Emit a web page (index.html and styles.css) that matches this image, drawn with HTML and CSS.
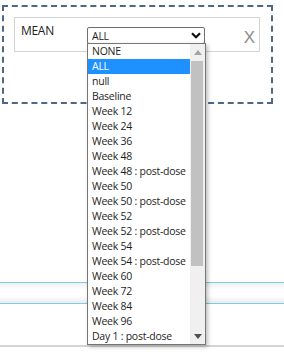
FILE: index.html
```html
<!DOCTYPE html>
<html>
<head>
<meta charset="utf-8">
<link rel="stylesheet" href="styles.css">
</head>
<body>
<div class="panel">
  <div class="row">
    <div class="label">MEAN</div>
    <div class="select">
      <span class="sel-text">ALL</span>
      <svg class="chev" width="10" height="7" viewBox="0 0 10 7"><path d="M1 1.2 L5 5.2 L9 1.2" fill="none" stroke="#111" stroke-width="2.2"/></svg>
    </div>
    <div class="close">X</div>
  </div>
</div>
<div class="strip"></div>
<div class="bottom-line"></div>

<div class="dropdown">
  <ul class="options">
    <li>NONE</li>
    <li class="active">ALL</li>
    <li>null</li>
    <li>Baseline</li>
    <li>Week 12</li>
    <li>Week 24</li>
    <li>Week 36</li>
    <li>Week 48</li>
    <li>Week 48 : post-dose</li>
    <li>Week 50</li>
    <li>Week 50 : post-dose</li>
    <li>Week 52</li>
    <li>Week 52 : post-dose</li>
    <li>Week 54</li>
    <li>Week 54 : post-dose</li>
    <li>Week 60</li>
    <li>Week 72</li>
    <li>Week 84</li>
    <li>Week 96</li>
    <li>Day 1 : post-dose</li>
  </ul>
  <div class="scrollbar">
    <svg class="arrow-up" width="8" height="5" viewBox="0 0 8 5"><path d="M0 5 L4 0 L8 5 Z" fill="#a3a3a3"/></svg>
    <div class="thumb"></div>
    <svg class="arrow-down" width="8" height="5" viewBox="0 0 8 5"><path d="M0 0 L8 0 L4 5 Z" fill="#505050"/></svg>
  </div>
</div>
</body>
</html>
```
FILE: styles.css
```css
html, body {
  margin: 0;
  padding: 0;
  background: #fff;
}
body {
  position: relative;
  width: 284px;
  height: 352px;
  overflow: hidden;
  font-family: "Open Sans", "Noto Sans", sans-serif;
  color: #222;
}
.panel {
  box-sizing: border-box;
  margin: 5px 11px 0 2px;
  height: 99px;
  border: 2px dashed #4d6784;
  padding: 10px;
}
.row {
  box-sizing: border-box;
  width: 246px;
  height: 35px;
  border: 1px solid #d4d4d4;
  display: flex;
  align-items: flex-start;
}
.label {
  width: 66px;
  padding-left: 6px;
  padding-top: 5px;
  font-size: 12px;
  line-height: 16px;
  letter-spacing: -0.3px;
}
.select {
  box-sizing: border-box;
  margin-top: 9px;
  width: 118px;
  height: 17px;
  border: 1px solid #6e6e6e;
  border-radius: 2px;
  display: flex;
  align-items: center;
  justify-content: space-between;
  padding: 0 3px 0 4px;
  font-size: 10.5px;
  letter-spacing: -0.25px;
}
.sel-text {
  line-height: 15px;
  padding-top: 2px;
}
.chev {
  display: block;
}
.close {
  margin-left: auto;
  margin-right: 4px;
  margin-top: 11px;
  font-family: "Liberation Sans", sans-serif;
  font-size: 17px;
  line-height: 17px;
  color: #8c8c8c;
}
.strip {
  margin-top: 178px;
  height: 20px;
  border-top: 1px solid #7fcbe6;
  border-bottom: 1px solid #7fcbe6;
  background: linear-gradient(#efefef, #fff 35%, #fff 65%, #ebebeb);
}
.bottom-line {
  margin-top: 41px;
  height: 2px;
  background: #d4d4d4;
}
.dropdown {
  position: absolute;
  left: 87px;
  top: 43px;
  box-sizing: border-box;
  width: 119px;
  height: 302px;
  border: 1px solid #767676;
  background: #fff;
  display: flex;
  box-shadow: 2px 2px 4px rgba(0,0,0,0.25);
}
.options {
  list-style: none;
  margin: 0;
  padding: 0;
  flex: 1;
  font-size: 10.5px;
  letter-spacing: -0.25px;
}
.options li {
  height: 15px;
  line-height: 15px;
  padding-left: 4px;
  white-space: nowrap;
  color: #1e1e1e;
}
.options li.active {
  background: #1e90ff;
  color: #fff;
}
.scrollbar {
  position: relative;
  width: 15px;
  background: #f0f0f0;
}
.arrow-up {
  position: absolute;
  left: 4px;
  top: 6px;
}
.arrow-down {
  position: absolute;
  left: 4px;
  bottom: 5px;
}
.thumb {
  position: absolute;
  left: 1px;
  right: 2px;
  top: 17px;
  height: 205px;
  background: #c1c1c1;
}
```
